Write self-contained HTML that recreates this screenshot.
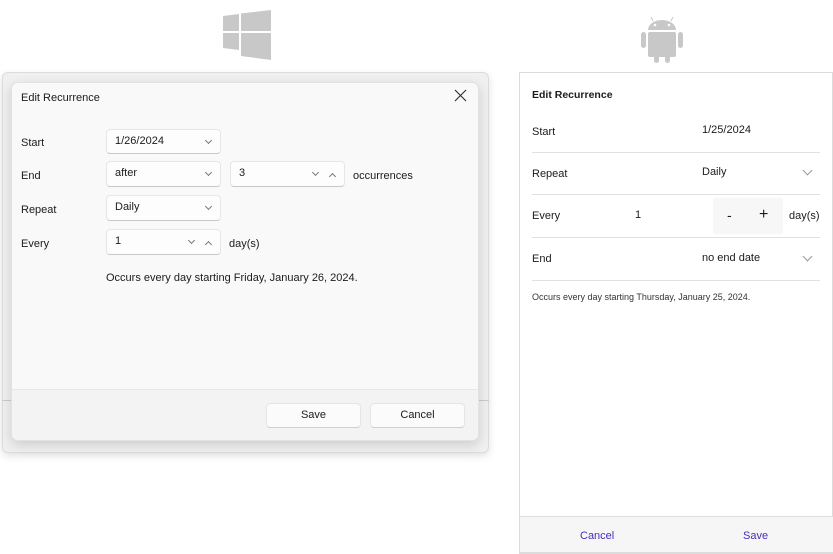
<!DOCTYPE html>
<html><head><style>
*{box-sizing:border-box;margin:0;padding:0}
body{width:833px;height:554px;background:#fff;position:relative;overflow:hidden;font-family:"Liberation Sans",sans-serif;font-size:11px;color:#1b1b1b}
.a{position:absolute}
.box{position:absolute;background:#fdfdfd;border:1px solid #e6e6e6;border-bottom-color:#c8c8c8;border-radius:4px;padding:0 8px;line-height:22px}
.chev{position:absolute;width:5px;height:5px;border-right:1px solid #777;border-bottom:1px solid #777;transform:rotate(45deg)}
.up{position:absolute;width:5px;height:5px;border-left:1px solid #777;border-top:1px solid #777;transform:rotate(45deg)}
.line{position:absolute;left:532px;width:288px;height:1px;background:#e0e0e0}
.btn{position:absolute;background:#fbfbfb;border:1px solid #e5e5e5;border-bottom-color:#d0d0d0;border-radius:4px;text-align:center;line-height:23px}
</style></head><body>
<svg class="a" style="left:222px;top:10px" width="50" height="50" viewBox="0 0 50 50"><path d="M1 6l16-2v17H1zM19 3.5L49 0v21H19zM1 23h16v17L1 38zM19 23h30v27l-30-4z" fill="#c8c8c8"/></svg>
<div class="a" style="left:2px;top:72px;width:487px;height:381px;background:#f0f0f0;border:1px solid #dcdcdc;border-radius:6px;box-shadow:0 3px 8px rgba(0,0,0,.12)"></div>
<div class="a" style="left:2px;top:400px;width:487px;height:1px;background:#ccc"></div>
<div class="a" style="left:11px;top:82px;width:468px;height:359px;background:#f9f9f9;border:1px solid #e2e2e2;border-radius:7px;box-shadow:0 4px 12px rgba(0,0,0,.15);overflow:hidden">
 <div class="a" style="left:0;top:306px;width:468px;height:53px;background:#f3f3f3;border-top:1px solid #e8e8e8"></div>
</div>
<div class="a" style="left:21px;top:92px;font-size:11px">Edit Recurrence</div>
<svg class="a" style="left:454px;top:89px" width="13" height="13"><path d="M1 1L12 12M12 1L1 12" stroke="#333" stroke-width="1.2"/></svg>
<div class="a" style="left:21px;top:137px">Start</div>
<div class="a" style="left:21px;top:170px">End</div>
<div class="a" style="left:21px;top:204px">Repeat</div>
<div class="a" style="left:21px;top:238px">Every</div>
<div class="box" style="left:106px;top:129px;width:115px;height:25px">1/26/2024<span class="chev" style="right:9px;top:8px"></span></div>
<div class="box" style="left:106px;top:161px;width:115px;height:26px">after<span class="chev" style="right:9px;top:8px"></span></div>
<div class="box" style="left:230px;top:161px;width:115px;height:26px">3<span class="chev" style="right:26px;top:8px"></span><span class="up" style="right:9px;top:12px"></span></div>
<div class="a" style="left:353px;top:170px">occurrences</div>
<div class="box" style="left:106px;top:195px;width:115px;height:26px">Daily<span class="chev" style="right:9px;top:8px"></span></div>
<div class="box" style="left:106px;top:229px;width:115px;height:26px">1<span class="chev" style="right:26px;top:8px"></span><span class="up" style="right:9px;top:12px"></span></div>
<div class="a" style="left:229px;top:238px">day(s)</div>
<div class="a" style="left:106px;top:272px">Occurs every day starting Friday, January 26, 2024.</div>
<div class="btn" style="left:266px;top:403px;width:95px;height:25px">Save</div>
<div class="btn" style="left:370px;top:403px;width:95px;height:25px">Cancel</div>
<svg class="a" style="left:640px;top:13px" width="44" height="50" viewBox="0 0 44 50"><path d="M11 4l2 4M33 4l-2 4" stroke="#c8c8c8" stroke-width="1"/><path d="M8 17a14 10 0 0 1 28 0z" fill="#c8c8c8"/><rect x="8" y="19" width="28" height="25" rx="2" fill="#c8c8c8"/><rect x="1" y="19" width="5" height="16" rx="2.5" fill="#c8c8c8"/><rect x="38" y="19" width="5" height="16" rx="2.5" fill="#c8c8c8"/><rect x="14" y="40" width="5" height="10" rx="2.5" fill="#c8c8c8"/><rect x="25" y="40" width="5" height="10" rx="2.5" fill="#c8c8c8"/><circle cx="15" cy="12" r="1.3" fill="#fff"/><circle cx="29" cy="12" r="1.3" fill="#fff"/></svg>
<div class="a" style="left:519px;top:72px;width:314px;height:482px;border:1px solid #dcdcdc;background:#fff"></div>
<div class="a" style="left:520px;top:516px;width:313px;height:37px;background:#f6f6f6;border-top:1px solid #ddd;border-bottom:1px solid #ddd"></div>
<div class="a" style="left:532px;top:89px;font-weight:bold;font-size:10.5px">Edit Recurrence</div>
<div class="a" style="left:532px;top:126px">Start</div><div class="a" style="left:702px;top:124px">1/25/2024</div>
<div class="line" style="top:152px"></div>
<div class="a" style="left:532px;top:168px">Repeat</div><div class="a" style="left:702px;top:166px">Daily</div>
<span class="chev" style="left:804px;top:167px;border-color:#999;width:7px;height:7px"></span>
<div class="line" style="top:194px"></div>
<div class="a" style="left:532px;top:210px">Every</div><div class="a" style="left:635px;top:209px">1</div>
<div class="a" style="left:713px;top:198px;width:70px;height:36px;background:#f7f7f7"></div>
<div class="a" style="left:727px;top:207px;font-size:14px">-</div><div class="a" style="left:759px;top:206px;font-size:16px">+</div>
<div class="a" style="left:789px;top:210px">day(s)</div>
<div class="line" style="top:237px"></div>
<div class="a" style="left:532px;top:253px">End</div><div class="a" style="left:702px;top:252px">no end date</div>
<span class="chev" style="left:804px;top:253px;border-color:#999;width:7px;height:7px"></span>
<div class="line" style="top:280px"></div>
<div class="a" style="left:532px;top:292px;font-size:9px;color:#333">Occurs every day starting Thursday, January 25, 2024.</div>
<div class="a" style="left:580px;top:530px;color:#4b2bc0">Cancel</div>
<div class="a" style="left:743px;top:530px;color:#4b2bc0">Save</div>
</body></html>
